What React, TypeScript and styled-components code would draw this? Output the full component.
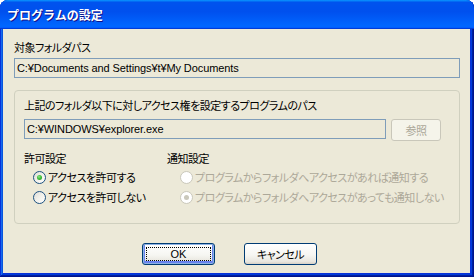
import React from 'react';
import styled, { createGlobalStyle } from 'styled-components';

const GlobalStyle = createGlobalStyle`
  html, body {
    margin: 0;
    padding: 0;
    background: #ffffff;
  }
`;

const jp = `"Noto Sans CJK JP", "Liberation Sans", sans-serif`;
const latin = `"Liberation Sans", "Noto Sans CJK JP", sans-serif`;

const Window = styled.div`
  width: 474px;
  height: 277px;
  box-sizing: border-box;
  display: flex;
  flex-direction: column;
  border-radius: 8px 8px 0 0;
  overflow: hidden;
  background: #0831d9;
  padding: 0 4px 4px 3px;
  box-shadow: inset -1px -1px #00138c, inset 1px 1px #0831d9, inset -2px -2px #001ea0,
    inset 2px 2px #166aee, inset -3px -3px #003bda, inset 3px 3px #0855dd;
`;

const TitleBar = styled.div`
  height: 29px;
  flex: none;
  margin: 0 -4px 0 -3px;
  padding-left: 7px;
  display: flex;
  align-items: center;
  background: linear-gradient(
    180deg,
    #0997ff,
    #0053ee 8%,
    #0050ee 40%,
    #06f 88%,
    #06f 93%,
    #005bff 95%,
    #003dd7 96%,
    #003dd7
  );
  color: #ffffff;
  font-family: ${jp};
  font-weight: 700;
  font-size: 12px;
  line-height: 14px;
  text-shadow: 1px 1px #0f1089;
`;

const Client = styled.div`
  flex: 1;
  background: #ece9d8;
  padding: 10px 10px 0 11px;
  display: flex;
  flex-direction: column;
  font-family: ${jp};
  font-feature-settings: 'palt';
  font-size: 11px;
  letter-spacing: -0.5px;
  color: #000000;
`;

const Label = styled.div<{ $disabled?: boolean }>`
  line-height: 16px;
  height: 16px;
  white-space: nowrap;
  color: ${(p) => (p.$disabled ? '#aca899' : '#000000')};
`;

const Field = styled.div<{ $width?: number }>`
  box-sizing: border-box;
  height: 20px;
  width: ${(p) => (p.$width ? `${p.$width}px` : '100%')};
  border: 1px solid #7f9db9;
  background: #ece9d8;
  padding-left: 2px;
  display: flex;
  align-items: center;
  font-family: ${latin};
  font-feature-settings: normal;
  font-size: 11px;
  letter-spacing: -0.1px;
  white-space: nowrap;
  flex: none;
`;

const GroupBox = styled.div`
  margin-top: 12px;
  box-sizing: border-box;
  border: 1px solid #d0d0bf;
  border-radius: 4px;
  padding: 6px 18px 16px 9px;
  display: flex;
  flex-direction: column;
`;

const PathRow = styled.div`
  margin-top: 6px;
  display: flex;
  align-items: flex-start;
  gap: 5px;
`;

const SettingsRow = styled.div`
  margin-top: 9px;
  display: grid;
  grid-template-columns: 143px 1fr;
`;

const Column = styled.div`
  display: flex;
  flex-direction: column;
`;

const RadioList = styled.div<{ $indent: number }>`
  margin-top: 1px;
  padding-left: ${(p) => p.$indent}px;
  display: flex;
  flex-direction: column;
`;

const RadioRow = styled.div<{ $disabled?: boolean }>`
  height: 20px;
  display: flex;
  align-items: center;
  gap: 2px;
  white-space: nowrap;
  color: ${(p) => (p.$disabled ? '#aca899' : '#000000')};
`;

const RadioCircle = styled.span<{ $checked?: boolean; $disabled?: boolean }>`
  width: 13px;
  height: 13px;
  box-sizing: border-box;
  border-radius: 50%;
  flex: none;
  display: flex;
  align-items: center;
  justify-content: center;
  border: 1px solid ${(p) => (p.$disabled ? '#cac8bb' : '#1c5180')};
  background: ${(p) =>
    p.$disabled
      ? '#ffffff'
      : 'linear-gradient(135deg, #dcdcd7 0%, #f0efe9 45%, #ffffff 100%)'};

  &::after {
    content: '';
    display: ${(p) => (p.$checked ? 'block' : 'none')};
    width: 5px;
    height: 5px;
    border-radius: 50%;
    background: ${(p) =>
      p.$disabled ? '#cac8bb' : 'radial-gradient(circle at 40% 35%, #8fe38c 0%, #3fbf3a 45%, #1f9a1f 100%)'};
  }
`;

const ButtonBar = styled.div`
  margin-top: 19px;
  padding-left: 128px;
  display: flex;
  gap: 29px;
`;

const Button = styled.button<{ $focused?: boolean; $w?: number }>`
  width: ${(p) => p.$w ?? 73}px;
  height: 22px;
  box-sizing: border-box;
  padding: 0;
  border: 1px solid #003c74;
  border-radius: 3px;
  background: linear-gradient(180deg, #ffffff 0%, #f6f6f2 55%, #e8e6de 88%, #d6d0c5 100%);
  box-shadow: ${(p) =>
    p.$focused ? 'inset 0 0 0 1px #8db2e3, inset 0 -1px 0 2px #6982ee' : 'none'};
  font-family: ${jp};
  font-feature-settings: 'palt';
  font-size: 11px;
  letter-spacing: -0.5px;
  color: #000000;
  display: flex;
  align-items: center;
  justify-content: center;

  &:disabled {
    border-color: #c9c7ba;
    background: #f5f4ea;
    color: #aca899;
    box-shadow: none;
  }
`;

const FocusRing = styled.span`
  box-sizing: border-box;
  width: calc(100% - 6px);
  height: calc(100% - 6px);
  border: 1px dotted #000000;
  display: flex;
  align-items: center;
  justify-content: center;
  font-family: ${latin};
  font-size: 11px;
  letter-spacing: 0;
`;

const Radio = ({
  label,
  checked,
  disabled,
}: {
  label: string;
  checked?: boolean;
  disabled?: boolean;
}) => (
  <RadioRow $disabled={disabled}>
    <RadioCircle $checked={checked} $disabled={disabled} />
    <span>{label}</span>
  </RadioRow>
);

const App = () => {
  return (
    <>
      <GlobalStyle />
      <Window>
        <TitleBar>プログラムの設定</TitleBar>
        <Client>
          <Label>対象フォルダパス</Label>
          <Field style={{ marginTop: 3 }}>C:¥Documents and Settings¥t¥My Documents</Field>

          <GroupBox>
            <Label>上記のフォルダ以下に対しアクセス権を設定するプログラムのパス</Label>
            <PathRow>
              <Field $width={362}>C:¥WINDOWS¥explorer.exe</Field>
              <Button $w={50} disabled>
                参照
              </Button>
            </PathRow>

            <SettingsRow>
              <Column>
                <Label>許可設定</Label>
                <RadioList $indent={9}>
                  <Radio label="アクセスを許可する" checked />
                  <Radio label="アクセスを許可しない" />
                </RadioList>
              </Column>
              <Column>
                <Label>通知設定</Label>
                <RadioList $indent={13}>
                  <Radio label="プログラムからフォルダへアクセスがあれば通知する" disabled />
                  <Radio label="プログラムからフォルダへアクセスがあっても通知しない" checked disabled />
                </RadioList>
              </Column>
            </SettingsRow>
          </GroupBox>

          <ButtonBar>
            <Button $focused>
              <FocusRing>OK</FocusRing>
            </Button>
            <Button>キャンセル</Button>
          </ButtonBar>
        </Client>
      </Window>
    </>
  );
};

export default App;
